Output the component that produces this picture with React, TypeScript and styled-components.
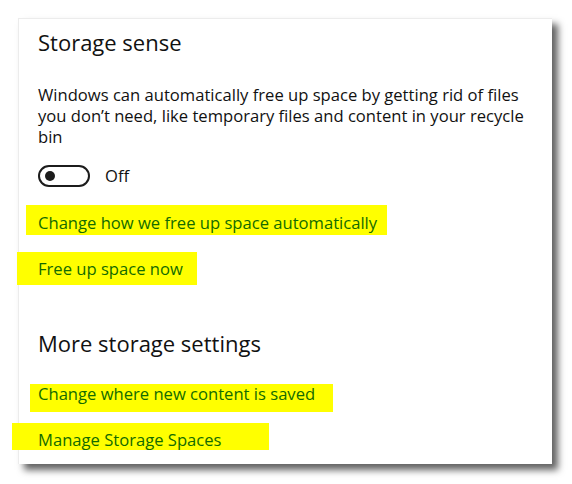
import styled, { createGlobalStyle } from 'styled-components';

const GlobalStyle = createGlobalStyle`
  html, body {
    margin: 0;
    padding: 0;
    background: #ffffff;
  }
  body {
    font-family: "Open Sans", "Noto Sans", "Liberation Sans", sans-serif;
    color: #111111;
  }
`

interface LinkItem {
    text: string;
    bleed: number;
    width: number;
    height: number;
    top: number;
    gap: number;
}

const storageLinks: LinkItem[] = [
    { text: 'Change how we free up space automatically', bleed: 12, width: 361, height: 30, top: 10, gap: 18 },
    { text: 'Free up space now', bleed: 21, width: 180, height: 33, top: 9, gap: 17 },
]

const moreLinks: LinkItem[] = [
    { text: 'Change where new content is saved', bleed: 8, width: 303, height: 28, top: 2, gap: 27 },
    { text: 'Manage Storage Spaces', bleed: 26, width: 257, height: 27, top: 9, gap: 11 },
]

const App = () => {
    return (
        <Page>
            <GlobalStyle />
            <Card>
                <Heading $gap={0}>Storage sense</Heading>
                <Description>
                    Windows can automatically free up space by getting rid of files
                    you don’t need, like temporary files and content in your recycle
                    bin
                </Description>
                <ToggleRow>
                    <Toggle role="switch" aria-checked={false}>
                        <Knob />
                    </Toggle>
                    <ToggleLabel>Off</ToggleLabel>
                </ToggleRow>
                {storageLinks.map(link => (
                    <Highlight key={link.text} $bleed={link.bleed} $width={link.width} $height={link.height} $top={link.top} $gap={link.gap}>
                        <LinkText>{link.text}</LinkText>
                    </Highlight>
                ))}
                <Heading $gap={44}>More storage settings</Heading>
                {moreLinks.map(link => (
                    <Highlight key={link.text} $bleed={link.bleed} $width={link.width} $height={link.height} $top={link.top} $gap={link.gap}>
                        <LinkText>{link.text}</LinkText>
                    </Highlight>
                ))}
            </Card>
        </Page>
    );
}

export default App;

const Page = styled.div`
  width: 572px;
  height: 484px;
  padding: 18px 0 0 18px;
  box-sizing: border-box;
  overflow: hidden;
`

const Card = styled.div`
  width: 534px;
  height: 446px;
  box-sizing: border-box;
  background: #ffffff;
  border-top: 1px solid #ececec;
  border-left: 1px solid #ececec;
  padding: 9px 0 0 19px;
  display: flex;
  flex-direction: column;
  align-items: flex-start;
  box-shadow: 6px 6px 7px rgba(0, 0, 0, 0.62);
`

interface HeadingProp {
    $gap: number,
}

const Heading = styled.h2<HeadingProp>`
  margin: ${props => props.$gap}px 0 0 0;
  font-size: 22px;
  line-height: 28px;
  font-weight: 400;
  color: #111111;
`

const Description = styled.p`
  margin: 28px 0 0 0;
  width: 500px;
  font-size: 16.6px;
  line-height: 21px;
  color: #111111;
`

const ToggleRow = styled.div`
  display: flex;
  align-items: center;
  gap: 15px;
  margin-top: 18px;
`

const Toggle = styled.div`
  width: 52px;
  height: 22px;
  box-sizing: border-box;
  border: 2.5px solid #1c1c1c;
  border-radius: 11px;
  display: flex;
  align-items: center;
  padding-left: 5px;
`

const Knob = styled.span`
  width: 10px;
  height: 10px;
  border-radius: 50%;
  background: #1c1c1c;
`

const ToggleLabel = styled.span`
  font-size: 16.6px;
  line-height: 22px;
  color: #111111;
`

interface HighlightProp {
    $bleed: number,
    $width: number,
    $height: number,
    $top: number,
    $gap: number,
}

const Highlight = styled.div<HighlightProp>`
  margin: ${props => props.$gap}px 0 0 -${props => props.$bleed}px;
  padding: ${props => props.$top}px 0 0 ${props => props.$bleed}px;
  width: ${props => props.$width}px;
  height: ${props => props.$height}px;
  box-sizing: border-box;
  background: #ffff00;
`

const LinkText = styled.span`
  display: block;
  font-size: 16.6px;
  line-height: 16px;
  color: #136b00;
  white-space: nowrap;
  cursor: pointer;
`
